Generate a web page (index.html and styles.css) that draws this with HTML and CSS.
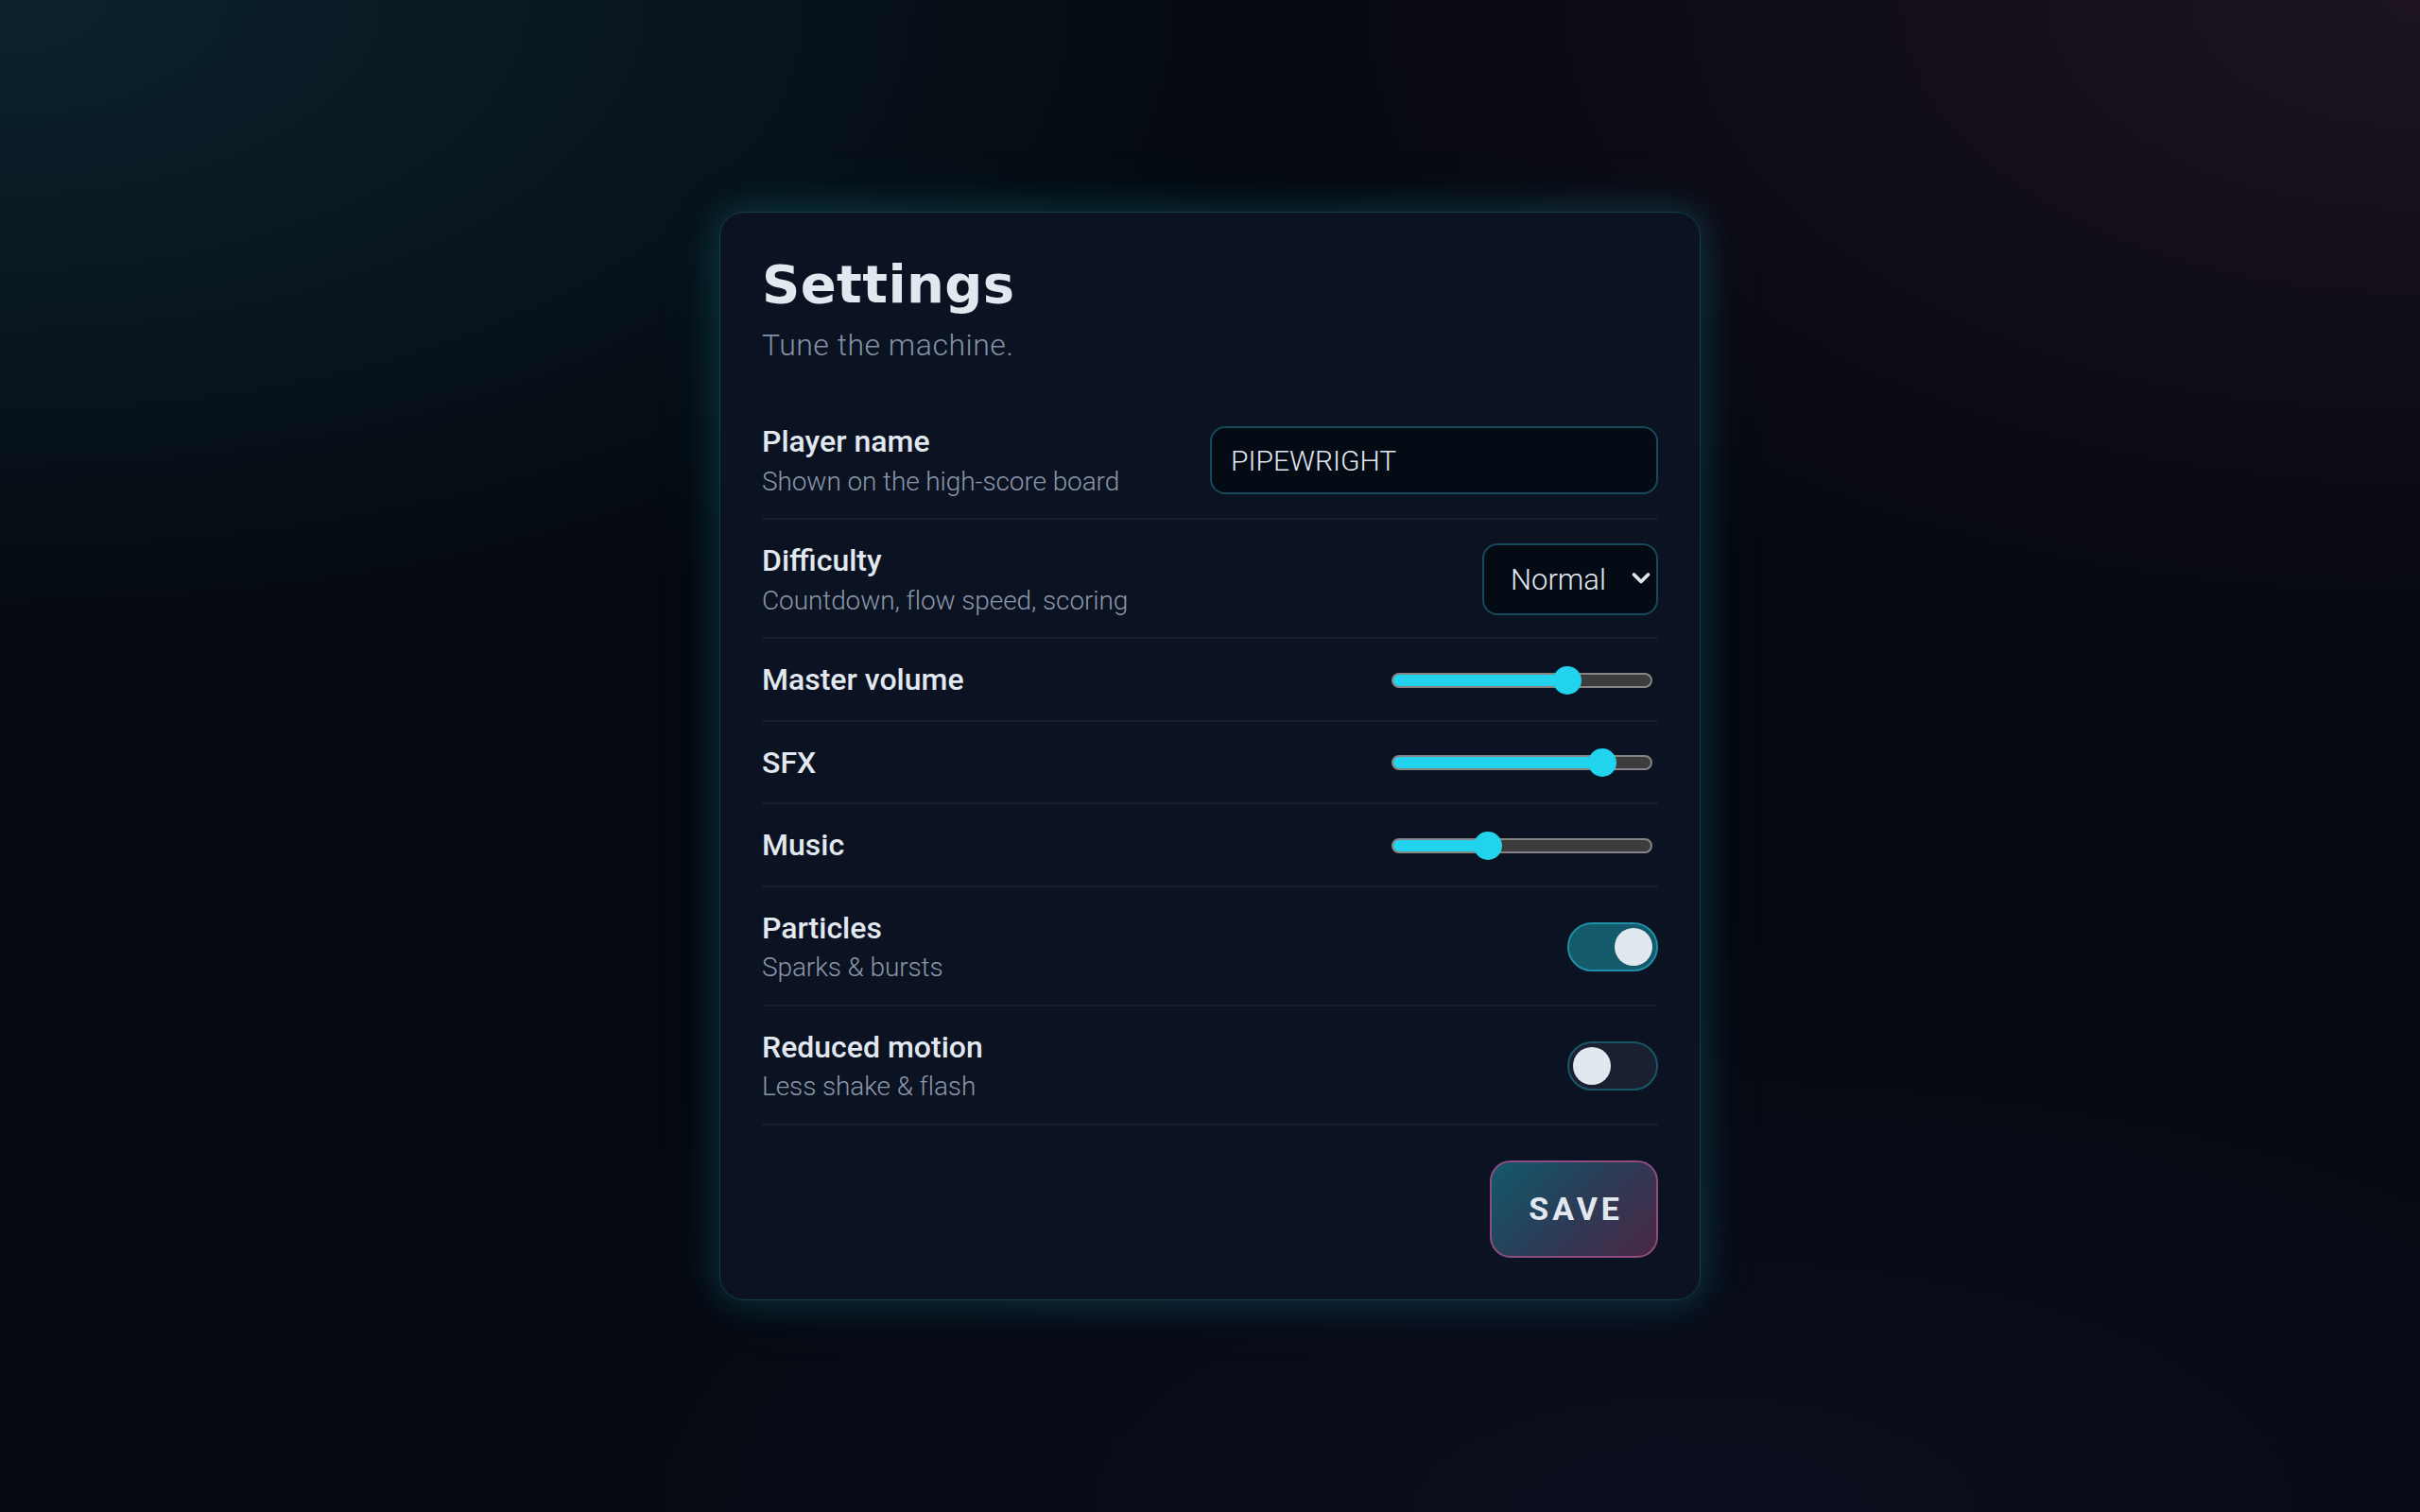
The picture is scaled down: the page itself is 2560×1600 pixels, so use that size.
FILE: index.html
```html
<!DOCTYPE html>
<html lang="en">
<head>
<meta charset="utf-8">
<title>Settings</title>
<link rel="stylesheet" href="styles.css">
</head>
<body>
<main class="page">
  <section class="card">
    <header class="head">
      <h1 class="title">Settings</h1>
      <p class="tagline">Tune the machine.</p>
    </header>
    <div class="rows">
      <div class="row">
        <div class="text">
          <div class="label">Player name</div>
          <div class="sub">Shown on the high-score board</div>
        </div>
        <input class="field" type="text" value="PIPEWRIGHT">
      </div>
      <div class="row">
        <div class="text">
          <div class="label">Difficulty</div>
          <div class="sub">Countdown, flow speed, scoring</div>
        </div>
        <div class="select-wrap">
          <select class="select">
            <option>Easy</option>
            <option selected>Normal</option>
            <option>Hard</option>
          </select>
          <svg class="chev" viewBox="0 0 20 14" width="20" height="14" aria-hidden="true"><path d="M2.5 3 L10 10.5 L17.5 3" fill="none" stroke="#e2e8f0" stroke-width="3.6" stroke-linecap="round" stroke-linejoin="round"/></svg>
        </div>
      </div>
      <div class="row">
        <div class="text"><div class="label">Master volume</div></div>
        <input class="range" type="range" min="0" max="100" value="70" style="--v:0.70">
      </div>
      <div class="row">
        <div class="text"><div class="label">SFX</div></div>
        <input class="range" type="range" min="0" max="100" value="85" style="--v:0.85">
      </div>
      <div class="row">
        <div class="text"><div class="label">Music</div></div>
        <input class="range" type="range" min="0" max="100" value="35" style="--v:0.35">
      </div>
      <div class="row">
        <div class="text">
          <div class="label">Particles</div>
          <div class="sub">Sparks &amp; bursts</div>
        </div>
        <button class="toggle on" type="button" aria-pressed="true"><span class="knob"></span></button>
      </div>
      <div class="row">
        <div class="text">
          <div class="label">Reduced motion</div>
          <div class="sub">Less shake &amp; flash</div>
        </div>
        <button class="toggle" type="button" aria-pressed="false"><span class="knob"></span></button>
      </div>
    </div>
    <div class="actions">
      <button class="save" type="button">SAVE</button>
    </div>
  </section>
</main>
</body>
</html>
```

FILE: styles.css
```css
* { box-sizing: border-box; }

html, body {
  margin: 0;
  height: 100%;
}

body {
  font-family: Roboto, "Noto Sans", "Liberation Sans", sans-serif;
  color: #e2e8f0;
  background:
    radial-gradient(ellipse 55% 45% at 0% 0%, rgba(16, 52, 64, 0.6), rgba(16, 52, 64, 0) 100%),
    radial-gradient(ellipse 50% 45% at 100% 0%, rgba(48, 28, 48, 0.55), rgba(48, 28, 48, 0) 100%),
    radial-gradient(ellipse 60% 40% at 70% 100%, rgba(16, 20, 40, 0.6), rgba(16, 20, 40, 0) 100%),
    #05080f;
}

.page {
  height: 100%;
  display: flex;
  align-items: center;
  justify-content: center;
}

.card {
  width: 1038px;
  padding: 44px;
  background: #0b1221;
  border: 1px solid #153a4b;
  border-radius: 26px;
  box-shadow: 0 0 36px 4px rgba(34, 211, 238, 0.17), 0 0 90px rgba(34, 211, 238, 0.05);
}

.head {
  margin-bottom: 37px;
}

.title {
  margin: 0;
  font-family: "DejaVu Sans", "Liberation Sans", sans-serif;
  font-weight: 700;
  font-size: 56px;
  line-height: 63.8px;
  letter-spacing: 0.4px;
  color: #e2e8f0;
}

.tagline {
  margin: 12.4px 0 0;
  font-weight: 300;
  font-size: 32px;
  line-height: 41.6px;
  letter-spacing: 0.5px;
  color: #8591a6;
}

.row {
  display: flex;
  align-items: center;
  justify-content: space-between;
  gap: 24px;
  padding: 23px 0 21px;
  border-bottom: 2px solid #161e2d;
}

.text {
  display: flex;
  flex-direction: column;
}

.label {
  font-weight: 500;
  font-size: 32px;
  line-height: 41.6px;
  color: #e2e8f0;
}

.sub {
  margin-top: 3px;
  font-weight: 300;
  font-size: 28px;
  line-height: 35.4px;
  letter-spacing: -0.1px;
  color: #8a97ab;
}

.field {
  width: 474px;
  height: 72px;
  padding: 0 20px;
  background: #050b15;
  border: 2px solid #16495a;
  border-radius: 16px;
  color: #e2e8f0;
  font-family: Roboto, "Noto Sans", sans-serif;
  font-weight: 300;
  font-size: 30px;
  outline: none;
}

.select-wrap {
  position: relative;
  width: 186px;
  height: 76px;
}

.select {
  appearance: none;
  -webkit-appearance: none;
  width: 100%;
  height: 100%;
  padding: 0 0 0 28px;
  background: #050b15;
  border: 2px solid #16495a;
  border-radius: 16px;
  color: #e2e8f0;
  font-family: Roboto, "Noto Sans", sans-serif;
  font-weight: 300;
  font-size: 31px;
  outline: none;
}

.chev {
  position: absolute;
  right: 8px;
  top: 30px;
  pointer-events: none;
}

.range {
  -webkit-appearance: none;
  appearance: none;
  width: 276px;
  height: 30px;
  margin: 0 6px 0 0;
  background: transparent;
  outline: none;
}

.range::-webkit-slider-runnable-track {
  height: 16px;
  border-radius: 8px;
  border: 2px solid #858585;
  background: linear-gradient(90deg, #22d3ee 0, #22d3ee calc(13px + var(--v) * (100% - 30px)), #3c3c3c calc(13px + var(--v) * (100% - 30px)), #3c3c3c 100%);
}

.range::-webkit-slider-thumb {
  -webkit-appearance: none;
  appearance: none;
  width: 30px;
  height: 30px;
  margin-top: -9px;
  border-radius: 50%;
  background: #22d3ee;
  border: none;
}

.toggle {
  position: relative;
  width: 96px;
  height: 52px;
  padding: 0;
  border-radius: 26px;
  border: 2px solid #1b5667;
  background: #1a2030;
  cursor: pointer;
}

.toggle.on {
  border-color: #1f8ea6;
  background: #135a6a;
}

.knob {
  position: absolute;
  top: 4px;
  left: 4px;
  width: 40px;
  height: 40px;
  border-radius: 50%;
  background: #e2e8f0;
}

.toggle.on .knob {
  left: auto;
  right: 4px;
}

.actions {
  display: flex;
  justify-content: flex-end;
  padding-top: 37px;
}

.save {
  height: 103px;
  padding: 0 35px 0 39px;
  border-radius: 22px;
  border: 2px solid #8f4d7f;
  background: linear-gradient(135deg, #12596c 0%, #2c3b56 52%, #4b2745 100%);
  color: #e2e8f0;
  font-family: Roboto, "Noto Sans", sans-serif;
  font-weight: 700;
  font-size: 34px;
  letter-spacing: 4px;
  cursor: pointer;
}
```
